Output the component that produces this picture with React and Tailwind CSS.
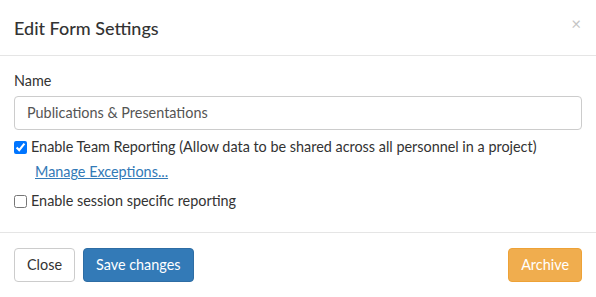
export default function App() {
  return (
    <div className="w-[596px] h-[297px] bg-white text-[#333] overflow-hidden" style={{ fontFamily: "Lato, 'Liberation Sans', sans-serif" }}>
      <div className="h-[56px] border-b border-[#e5e5e5] flex items-center justify-between pl-[14px] pr-[15px]">
        <h4 className="text-[18px] leading-none text-[#333] font-medium">Edit Form Settings</h4>
        <span className="text-[#c5c5c5] text-[17px] leading-none -mt-[8px]">×</span>
      </div>
      <div className="px-[14px] pt-[16px] h-[177px] border-b border-[#e5e5e5] text-[14.4px]">
        <label className="block leading-[18px] mb-[6px]">Name</label>
        <div className="w-[568px] h-[34px] border border-[#ccc] rounded-[4px] flex items-center px-[12px] text-[#555]">Publications &amp; Presentations</div>
        <div className="flex items-center mt-[7px] h-[20px]">
          <input type="checkbox" defaultChecked className="w-[13px] h-[13px] m-0 mr-[4px] accent-[#0075ff]" />
          <span>Enable Team Reporting (Allow data to be shared across all personnel in a project)</span>
        </div>
        <div className="pl-[21px] mt-[5px] h-[20px] flex items-center">
          <a href="#" className="text-[#337ab7] underline">Manage Exceptions...</a>
        </div>
        <div className="flex items-center mt-[9px] h-[20px]">
          <input type="checkbox" className="w-[13px] h-[13px] m-0 mr-[4px]" />
          <span>Enable session specific reporting</span>
        </div>
      </div>
      <div className="flex items-start justify-between px-[14px] pt-[15px] text-[14.4px]">
        <div className="flex gap-[8px]">
          <button className="h-[34px] px-[12px] border border-[#ccc] rounded-[4px] text-[#333] bg-white">Close</button>
          <button className="h-[34px] px-[12px] border border-[#2e6da4] rounded-[4px] text-white bg-[#337ab7]">Save changes</button>
        </div>
        <button className="h-[34px] px-[12px] border border-[#eea236] rounded-[4px] text-white bg-[#f0ad4e]">Archive</button>
      </div>
    </div>
  );
}
